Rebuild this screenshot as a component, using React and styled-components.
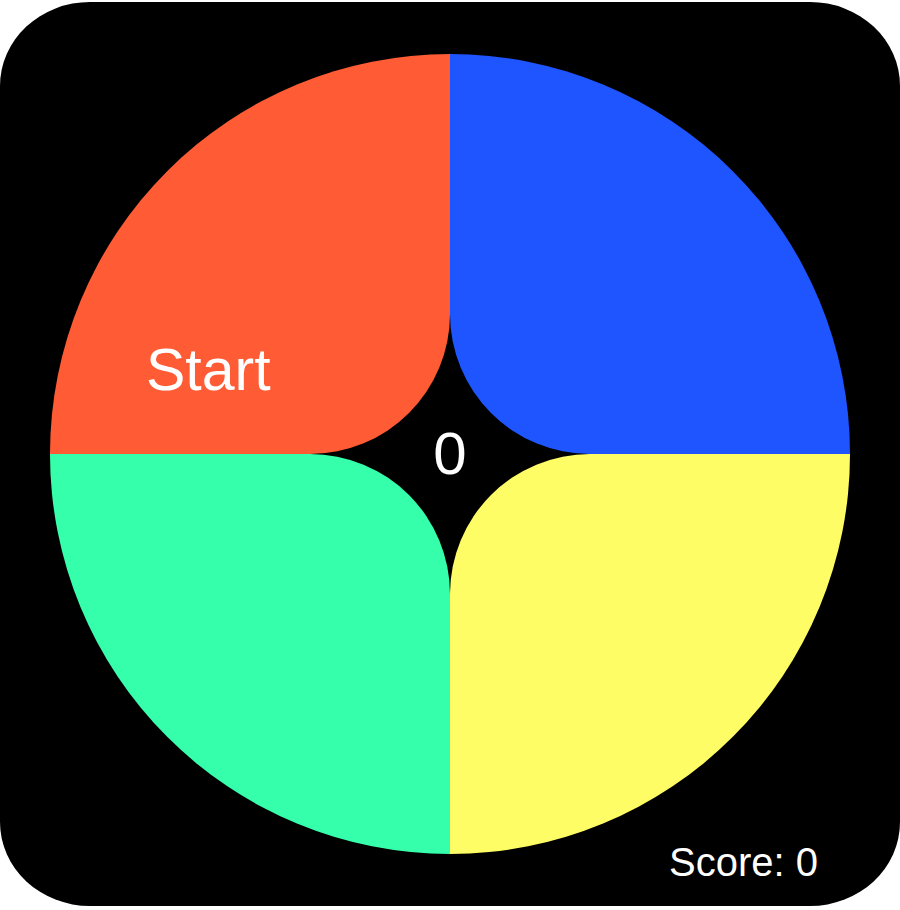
import React from "react";
import styled, { createGlobalStyle } from "styled-components";

const Global = createGlobalStyle`
  html, body { margin: 0; padding: 0; background: #fff; }
  body { font-family: "Liberation Sans", Arial, sans-serif; }
`;

const Board = styled.div`
  position: relative;
  margin-top: 2px;
  width: 900px;
  height: 904px;
  background: #000;
  border-radius: 90px / 84px;
  display: flex;
  align-items: center;
  justify-content: center;
`;

const Wheel = styled.div`
  position: relative;
  width: 800px;
  height: 800px;
  border-radius: 50%;
  overflow: hidden;
  display: grid;
  grid-template-columns: 400px 400px;
  grid-template-rows: 400px 400px;
`;

const radii = {
  tl: "0 0 140px 0",
  tr: "0 0 0 140px",
  bl: "0 140px 0 0",
  br: "140px 0 0 0",
};

const Pad = styled.div`
  background: ${(p) => p.$color};
  border-radius: ${(p) => radii[p.$corner]};
  display: flex;
  align-items: flex-end;
  padding: 0 0 54px 96px;
  box-sizing: border-box;
`;

const StartLabel = styled.span`
  color: #fff;
  font-size: 59px;
  line-height: 1;
  cursor: pointer;
`;

const Count = styled.div`
  position: absolute;
  left: 50%;
  top: 50%;
  transform: translate(-50%, -50%);
  color: #fff;
  font-size: 60px;
  line-height: 1;
`;

const Score = styled.div`
  position: absolute;
  right: 82px;
  bottom: 24px;
  color: #fff;
  font-size: 40px;
  line-height: 1;
`;

export default function App() {
  return (
    <>
      <Global />
      <Board>
        <Wheel>
          <Pad $color="#FF5C35" $corner="tl">
            <StartLabel>Start</StartLabel>
          </Pad>
          <Pad $color="#1E55FF" $corner="tr" />
          <Pad $color="#36FFAB" $corner="bl" />
          <Pad $color="#FFFD66" $corner="br" />
          <Count>0</Count>
        </Wheel>
        <Score>Score: 0</Score>
      </Board>
    </>
  );
}
